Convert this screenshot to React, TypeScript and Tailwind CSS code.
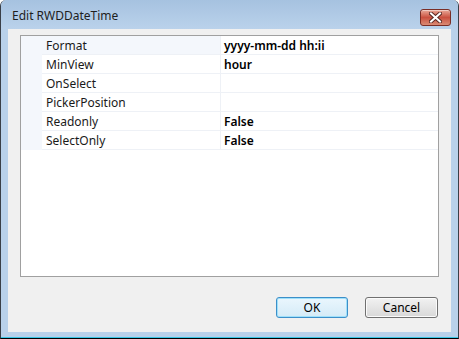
import * as React from "react";

type Prop = { name: string; value: string };

const props: Prop[] = [
  { name: "Format", value: "yyyy-mm-dd hh:ii" },
  { name: "MinView", value: "hour" },
  { name: "OnSelect", value: "" },
  { name: "PickerPosition", value: "" },
  { name: "Readonly", value: "False" },
  { name: "SelectOnly", value: "False" }
];

function CloseButton() {
  return (
    <div className="flex h-[17px] w-[31px] items-center justify-center rounded-[3px] border border-[#7a2e26] bg-linear-to-b from-[#e8a898] via-[#c9503f] to-[#d98a74] shadow-[inset_0_1px_0_rgba(255,255,255,0.45)]">
      <svg width="13" height="11" viewBox="0 0 13 11">
        <path
          d="M2 1.5 L11 9.5 M11 1.5 L2 9.5"
          stroke="#5a2a24"
          strokeWidth="4"
          strokeLinecap="square"
        />
        <path
          d="M2 1.5 L11 9.5 M11 1.5 L2 9.5"
          stroke="#ffffff"
          strokeWidth="2"
          strokeLinecap="square"
        />
      </svg>
    </div>
  );
}

function PropertyRow({ row, first }: { row: Prop; first: boolean }) {
  return (
    <div className="flex h-[19px]">
      <div className="w-[21px] bg-[#f4f7fc]" />
      <div className="flex flex-1 border-b border-[#eef1f6]">
        <div
          className={
            first
              ? "flex w-[179px] items-center border-r border-[#eef1f6] bg-[#f4f7fc] pl-[4px] pt-px text-[12px] text-[#1a1a1a]"
              : "flex w-[179px] items-center border-r border-[#eef1f6] bg-white pl-[4px] pt-px text-[12px] text-[#1a1a1a]"
          }
        >
          {row.name}
        </div>
        <div className="flex flex-1 items-center pl-[3px] pt-px text-[12px] font-semibold text-black">
          {row.value}
        </div>
      </div>
    </div>
  );
}

export default function App() {
  return (
    <div
      className="flex h-[339px] w-[459px] flex-col overflow-hidden rounded-tl-[6px] rounded-tr-[6px] border-x border-b border-x-[#3a3f47] border-b-black bg-[#b9d1ea]"
      style={{ fontFamily: '"Noto Sans", "Liberation Sans", sans-serif' }}
    >
      <div className="flex h-[29px] shrink-0 items-start justify-between bg-linear-to-b from-[#a6c2e0] to-[#bad2eb] pl-[11px] pr-[7px]">
        <span className="mt-[7px] text-[12px] text-[#1e1e1e]">Edit RWDDateTime</span>
        <div className="mt-[9px]">
          <CloseButton />
        </div>
      </div>
      <div className="flex min-h-0 flex-1 px-[7px] pb-[5px]">
        <div className="flex flex-1 flex-col bg-[#f0f0f0] px-[12px] pt-[6px]">
          <div className="flex h-[242px] flex-col border border-[#a0a0a0] bg-white">
            {props.map((p, i) => (
              <PropertyRow key={p.name} row={p} first={i === 0} />
            ))}
          </div>
          <div className="mt-[20px] flex justify-end gap-[17px] pr-[1px]">
            <button className="h-[21px] w-[72px] rounded-[3px] border border-[#3c8fc9] bg-linear-to-b from-[#eaf6fd] to-[#d4ebf7] text-[12px] text-black shadow-[inset_0_0_0_1px_#9fe0fa]">
              OK
            </button>
            <button className="h-[21px] w-[73px] rounded-[3px] border border-[#707070] bg-linear-to-b from-[#f2f2f2] to-[#d8d8d8] text-[12px] text-black shadow-[inset_0_0_0_1px_#fbfbfb]">
              Cancel
            </button>
          </div>
        </div>
      </div>
      <div className="h-px shrink-0 bg-[#3ac6e6]" />
    </div>
  );
}
